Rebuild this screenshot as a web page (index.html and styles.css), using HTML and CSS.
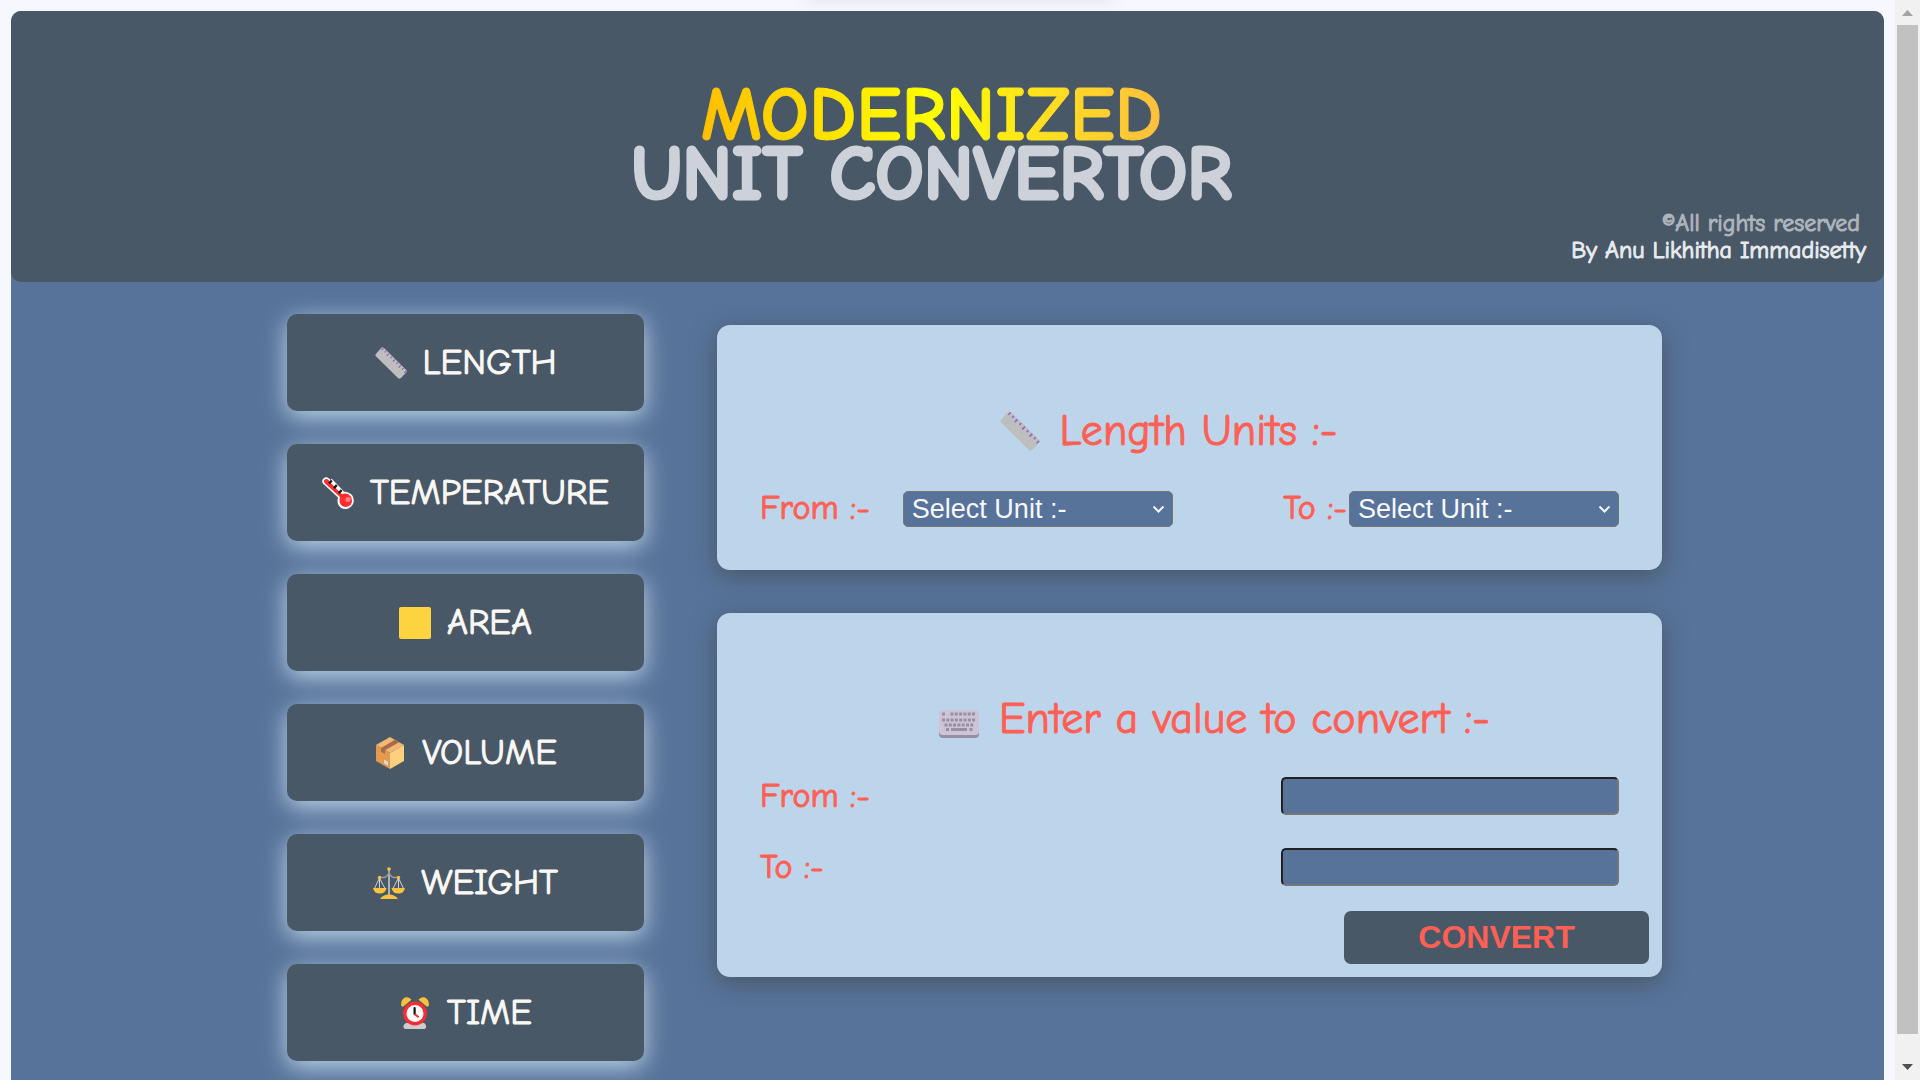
FILE: index.html
```html
<!DOCTYPE html>
<html lang="en">
<head>
<meta charset="utf-8">
<title>Modernized Unit Convertor</title>
<link rel="stylesheet" href="styles.css">
</head>
<body>
<svg class="sprite" aria-hidden="true">
  <symbol id="ruler" viewBox="0 0 32 32">
    <path d="M1.100 9.600Q-.3 8.200 1.100 6.800L6.200 1Q7.600-.3 9 1L31 22.700Q32.500 24.200 31 25.700L26 31Q24.500 32.500 23 31Z" fill="#bebebe"/>
    <path d="M8.500 1.200 6.700 3M11.200 3.900 9.700 5.400M14 6.700 11.800 8.900M17 9.600 15.500 11.100M20 12.500 17.800 14.700M22.800 15.400 21.300 16.900M25.800 18.300 23.600 20.500M28.600 21.100 27.100 22.600M31.300 23.800 29.300 25.800" stroke="#8d65c5" stroke-width="1.200" fill="none"/>
  </symbol>
  <symbol id="thermometer" viewBox="0 0 32 32">
    <path d="M1.500 1.500Q4-.8 7 1.500L19.500 14.500Q26 14 30 18Q33 22 31 27Q28 32 23.500 32Q18 32 16 27Q15 24 16 20.500L1.500 7Q-1.200 4 1.500 1.500Z" fill="#fff"/>
    <path d="M2.600 2.600Q4.500 1.200 6 2.600L20 17Q25 15.500 28.500 19Q31.500 23.500 28.500 28Q24 31.500 19.500 28.500Q16.500 25 18 20L2.600 6Q1.200 4.500 2.600 2.600Z" fill="#ff2d2d"/>
    <path d="M8.500 3 20.500 15.500" stroke="#fff" stroke-width="3.500"/>
    <path d="M9.800 3.500 7 6.500M14.800 8 12 11.300M19.600 13 16.800 16.200" stroke="#151515" stroke-width="2.300"/>
    <circle cx="26" cy="22.500" r="2.600" fill="#ff7b82"/>
  </symbol>
  <symbol id="square" viewBox="0 0 32 32">
    <rect width="32" height="32" rx="2" fill="#fdd440"/>
  </symbol>
  <symbol id="package" viewBox="0 0 32 32">
    <path d="M16 0 30 8 16 16 2 8Z" fill="#f2b872"/>
    <path d="M2 8 16 16V32L2 24Z" fill="#e39a4c"/>
    <path d="M30 8 16 16V32L30 24Z" fill="#ffcf80"/>
    <path d="M7 11 21 2.800 25 5.200 11 13.200V17L7 14.700Z" fill="#a66a51"/>
    <path d="M10 22.500 14 24.800V28.700L10 26.300Z" fill="#d8d8d8"/>
  </symbol>
  <symbol id="scales" viewBox="0 0 32 32">
    <path d="M16 2V28" stroke="#d0d0d0" stroke-width="1.500"/>
    <path d="M6.500 10.500H11Q14.500 10 16 5Q17.500 10 21 10.500H25.500" stroke="#9b9b9b" stroke-width="1.300" fill="none"/>
    <path d="M6.500 11 1.500 21.500M6.500 11V21.500M6.500 11 12 21.500M25.500 11 20 21.500M25.500 11V21.500M25.500 11 30.500 21.500" stroke="#d0d0d0" stroke-width="1" fill="none"/>
    <circle cx="16" cy="2" r="1.800" fill="#f9c23c"/><circle cx="6.500" cy="10.500" r="1.700" fill="#f9c23c"/><circle cx="25.500" cy="10.500" r="1.700" fill="#f9c23c"/>
    <path d="M0 21H13.500Q12.500 26.500 6.700 26.500Q1 26.500 0 21ZM18.500 21H32Q31 26.500 25.300 26.500Q19.500 26.500 18.500 21ZM7 32Q10 27.500 16 27.500T25 32Z" fill="#f9c23c"/>
  </symbol>
  <symbol id="clock" viewBox="0 0 32 32">
    <path d="M2.200 9Q1.500 3 6 .6Q10-.8 12.500 2.800L4 9.800ZM29.800 9Q30.500 3 26 .6Q22-.8 19.500 2.800L28 9.800Z" fill="#f9c23c"/>
    <path d="M7 26H25Q27.500 27.500 27 30.500Q26.500 32 25 32H7Q4.500 32 4.300 29.500Q4.500 27 7 26Z" fill="#cdcdcd"/>
    <circle cx="16" cy="16.500" r="10.200" fill="#fff" stroke="#fa2c33" stroke-width="3.400"/>
    <path d="M15.600 11V17" stroke="#111" stroke-width="2.200" stroke-linecap="round"/>
    <path d="M16 17.500 19 19.600" stroke="#fa2c33" stroke-width="2" stroke-linecap="round"/>
  </symbol>
  <symbol id="keyboard" viewBox="0 0 40 40">
    <rect y="12" width="40" height="27" rx="4" fill="#998ea4"/>
    <rect y="11" width="40" height="25" rx="4" fill="#cdc4d6"/>
    <path d="M3 15H6M11.500 15H36.500M3 21H36.500M5.500 26H35M7 30.500H10M30.500 30.500H33.500" stroke="#998ea4" stroke-width="3" stroke-dasharray="3 1.300"/>
    <path d="M12 30.500H28" stroke="#998ea4" stroke-width="3"/>
  </symbol>
</svg>
<div class="window">
  <div class="page">
    <header class="header">
      <h1 class="title"><span class="title-accent">MODERNIZED</span><span>UNIT CONVERTOR</span></h1>
      <p class="credit"><span class="rights">©All rights reserved</span><span>By Anu Likhitha Immadisetty</span></p>
    </header>
    <main class="content">
      <nav class="menu" aria-label="Unit types">
        <button class="menu-item" type="button"><svg class="icon"><use href="#ruler"/></svg>LENGTH</button>
        <button class="menu-item" type="button"><svg class="icon"><use href="#thermometer"/></svg>TEMPERATURE</button>
        <button class="menu-item" type="button"><svg class="icon"><use href="#square"/></svg>AREA</button>
        <button class="menu-item" type="button"><svg class="icon"><use href="#package"/></svg>VOLUME</button>
        <button class="menu-item" type="button"><svg class="icon"><use href="#scales"/></svg>WEIGHT</button>
        <button class="menu-item" type="button"><svg class="icon"><use href="#clock"/></svg>TIME</button>
      </nav>
      <form class="panels">
        <section class="card">
          <h2 class="card-title"><svg class="icon-large"><use href="#ruler"/></svg>Length Units :-</h2>
          <div class="row">
            <div class="field field-from"><label for="unit-from">From :-</label><span class="select-wrap"><select id="unit-from" class="select"><option>Select Unit :-</option></select><svg class="chevron" viewBox="0 0 12 8"><path d="M1 1.500 6 6.500 11 1.500"/></svg></span></div>
            <div class="field"><label for="unit-to">To :-</label><span class="select-wrap"><select id="unit-to" class="select"><option>Select Unit :-</option></select><svg class="chevron" viewBox="0 0 12 8"><path d="M1 1.500 6 6.500 11 1.500"/></svg></span></div>
          </div>
        </section>
        <section class="card">
          <h2 class="card-title"><svg class="icon-large"><use href="#keyboard"/></svg>Enter a value to convert :-</h2>
          <div class="values">
            <div class="row"><label for="value-from">From :-</label><input id="value-from" class="input" type="text"></div>
            <div class="row"><label for="value-to">To :-</label><input id="value-to" class="input" type="text"></div>
          </div>
          <button class="convert" type="button">CONVERT</button>
        </section>
      </form>
    </main>
  </div>
  <div class="scrollbar" aria-hidden="true">
    <svg class="arrow" viewBox="0 0 25 25"><path d="M7 16 12.500 10 18 16Z" fill="#a3a3a3"/></svg>
    <div class="track"><div class="thumb"></div></div>
    <svg class="arrow" viewBox="0 0 25 25"><path d="M7 9 12.500 15 18 9Z" fill="#505050"/></svg>
  </div>
</div>
</body>
</html>
```
FILE: styles.css
```css
* {
  box-sizing: border-box;
}

body {
  margin: 0;
  background: #f7f8ff;
  color: #faf8f5;
  font-family: "Comic Sans MS", "Comic Neue", "Noto Sans", sans-serif;
}

.sprite {
  position: absolute;
  width: 0;
  height: 0;
}

.window {
  display: flex;
  height: 100vh;
  overflow: hidden;
}

.window::before {
  content: "";
  position: absolute;
  top: -20px;
  left: 42%;
  width: 16%;
  height: 20px;
  box-shadow: 0 0 16px rgba(60, 50, 80, 0.12);
}

.page {
  flex: 1;
  align-self: flex-start;
  min-height: 100vh;
  margin: 11px 11px 0;
  border-radius: 10px;
  background: #577399;
}

.header {
  display: flex;
  flex-direction: column;
  padding: 75px 18px 18px;
  border-radius: 10px;
  background: #495867;
}

.title {
  display: flex;
  flex-direction: column;
  align-items: center;
  margin: 0;
  padding-right: 32px;
  color: #cdd1da;
  font-size: 76px;
  line-height: 59px;
  -webkit-text-stroke: 3px #cdd1da;
}

.title-accent {
  background: linear-gradient(to right, #ffbf00, #ffff00 50%, #ffbf3f);
  background-clip: text;
  color: transparent;
  -webkit-text-stroke: 1px transparent;
}

.credit {
  display: flex;
  flex-direction: column;
  align-items: flex-end;
  margin: 6px 0 0;
  color: #e8ebee;
  font-size: 24px;
  line-height: 27px;
  -webkit-text-stroke: 1px currentColor;
}

.rights {
  padding-right: 6px;
  color: #adb5bc;
}

.content {
  display: grid;
  grid-template-columns: 357fr 945fr;
  gap: 73px;
  padding: 32px 222px 60px 276px;
}

.menu {
  display: flex;
  flex-direction: column;
  gap: 33px;
}

.menu-item {
  display: flex;
  align-items: center;
  justify-content: center;
  gap: 16px;
  height: 97px;
  border: 0;
  border-radius: 10px;
  background: #495867;
  box-shadow: 0 6px 25px #bdd5ea;
  color: #faf8f5;
  font-family: inherit;
  font-size: 36px;
  -webkit-text-stroke: 1px currentColor;
}

.icon {
  width: 32px;
  height: 32px;
}

.icon-large {
  width: 40px;
  height: 40px;
}

.panels {
  display: flex;
  flex-direction: column;
  gap: 43px;
  padding-top: 11px;
}

.card {
  padding: 74px 43px 43px;
  border-radius: 13px;
  background: #bdd5ea;
  box-shadow: 0 6px 25px #495867;
  color: #fe5f55;
  font-size: 34px;
}

.card label,
.card-title {
  -webkit-text-stroke: 1px currentColor;
}

.card:last-child {
  padding: 74px 13px 13px 43px;
}

.card-title {
  display: flex;
  align-items: center;
  justify-content: center;
  gap: 20px;
  margin: 0 42px 0 0;
  font-size: 44px;
  font-weight: 400;
  line-height: 64px;
}

.card:last-child .card-title {
  margin: 0 0 0 20px;
}

.row {
  display: flex;
  align-items: center;
  justify-content: space-between;
}

.card-title + .row {
  margin-top: 27px;
}

.field {
  display: flex;
  align-items: center;
  gap: 2px;
  line-height: 37px;
}

.field-from {
  gap: 33px;
}

.select-wrap {
  display: grid;
  align-items: center;
}

.select {
  grid-area: 1 / 1;
  width: 270px;
  height: 36px;
  padding: 0 8px;
  appearance: none;
  border: 1px solid #767676;
  border-radius: 5px;
  background: #577399;
  color: #f7f7ff;
  font-family: "Liberation Sans", Arial, sans-serif;
  font-size: 27px;
}

.chevron {
  grid-area: 1 / 1;
  justify-self: end;
  width: 13px;
  height: 8px;
  margin-right: 8px;
  fill: none;
  stroke: #f7f7ff;
  stroke-width: 2;
  pointer-events: none;
}

.values {
  display: flex;
  flex-direction: column;
  gap: 33px;
  margin: 26px 30px 25px 0;
  line-height: 38px;
}

.input {
  width: 338px;
  height: 38px;
  border: 2px inset #767676;
  border-radius: 5px;
  background: #577399;
  color: #f7f7ff;
  font-size: 27px;
}

.convert {
  display: block;
  width: 305px;
  height: 53px;
  margin-left: auto;
  border: 0;
  border-radius: 7px;
  background: #495867;
  color: #fe5f55;
  font: 700 32px "Liberation Sans", Arial, sans-serif;
}

.scrollbar {
  display: flex;
  flex-direction: column;
  width: 25px;
  background: #f1f1f1;
}

.arrow {
  width: 25px;
  height: 25px;
}

.track {
  flex: 1;
  padding: 0 2px;
}

.thumb {
  height: 98%;
  background: #c1c1c1;
}
```
